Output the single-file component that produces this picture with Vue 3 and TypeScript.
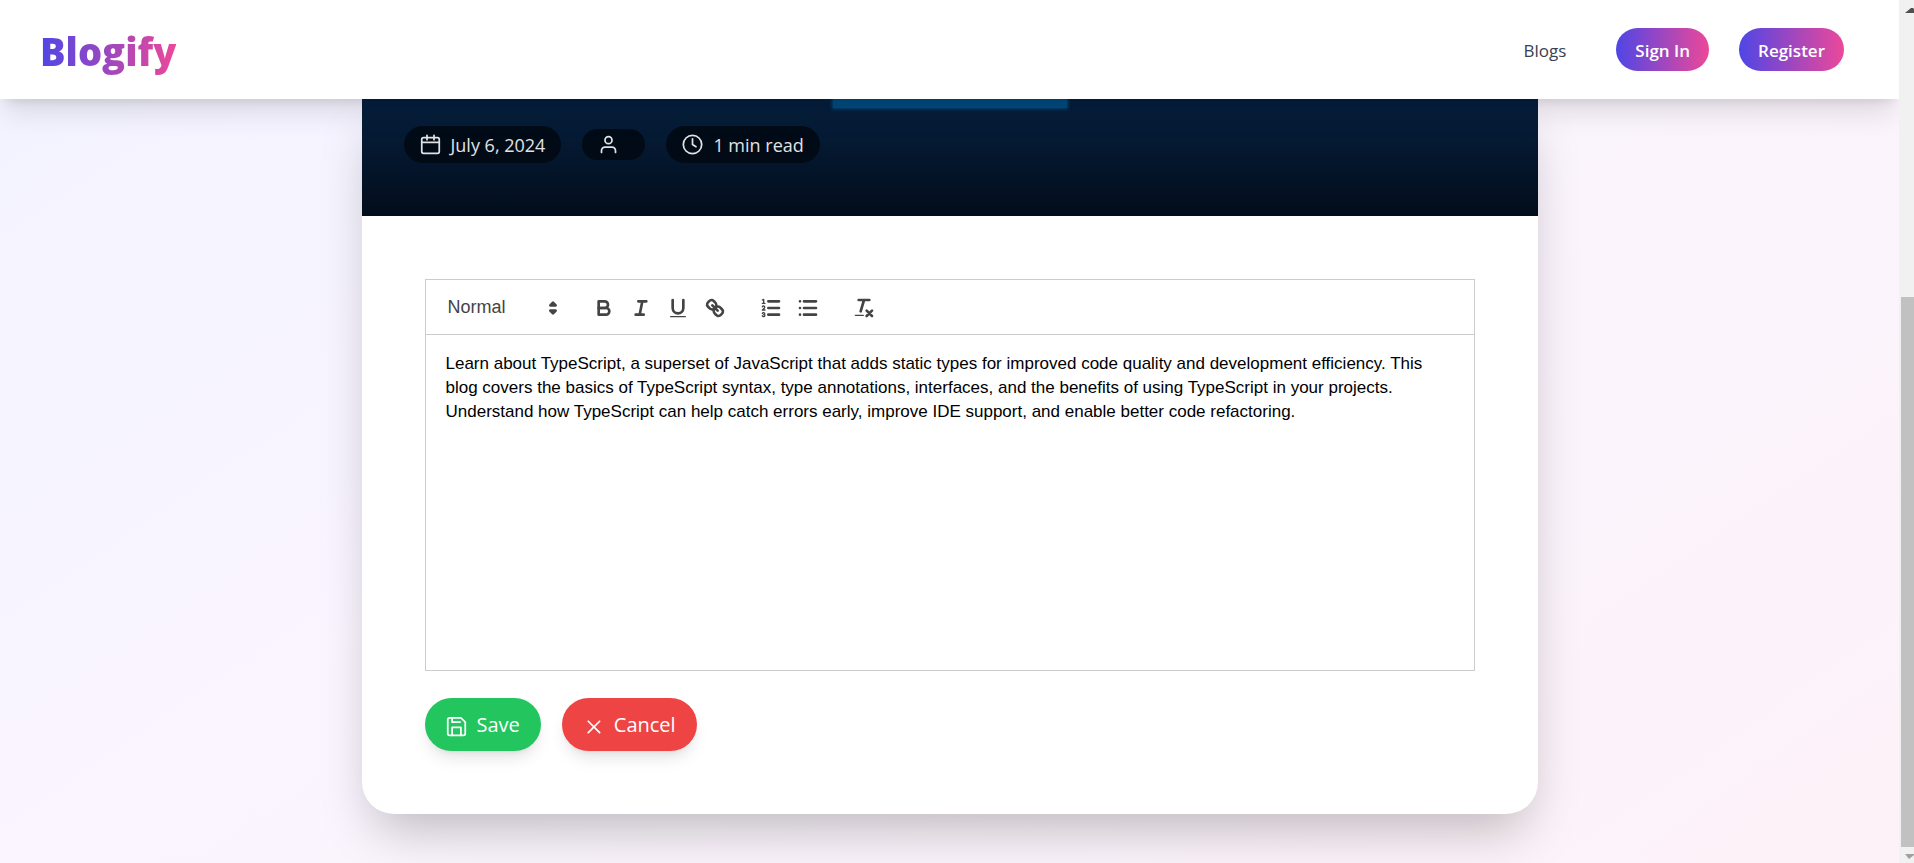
<script setup lang="ts">
import { ref } from 'vue'

const format = ref('Normal')
const body = ref(
  'Learn about TypeScript, a superset of JavaScript that adds static types for improved code quality and development efficiency. This blog covers the basics of TypeScript syntax, type annotations, interfaces, and the benefits of using TypeScript in your projects. Understand how TypeScript can help catch errors early, improve IDE support, and enable better code refactoring.'
)
</script>

<template>
  <div class="window">
    <div class="page">
      <header class="topbar">
        <a class="brand" href="#">Blogify</a>
        <nav class="nav">
          <a class="nav-link" href="#">Blogs</a>
          <a class="nav-pill" href="#">Sign In</a>
          <a class="nav-pill" href="#">Register</a>
        </nav>
      </header>

      <main class="card">
        <section class="hero">
          <div class="hero-mark"></div>
          <ul class="meta">
            <li class="chip">
              <svg class="chip-icon" viewBox="0 0 24 24" aria-hidden="true">
                <rect x="2" y="4" width="20" height="18" rx="2" />
                <path d="M2 9.500h20M8 1.500v5M16 1.500v5" />
              </svg>
              <span class="chip-text">July 6, 2024</span>
            </li>
            <li class="chip">
              <svg class="chip-icon" viewBox="0 0 24 24" aria-hidden="true">
                <circle cx="12" cy="7" r="4" />
                <path d="M20 21v-2a4 4 0 0 0-4-4H8a4 4 0 0 0-4 4v2" />
              </svg>
              <span class="chip-text"></span>
            </li>
            <li class="chip">
              <svg class="chip-icon" viewBox="0 0 24 24" aria-hidden="true">
                <circle cx="12" cy="12" r="10.500" />
                <path d="M12 5.500V12l4 2.500" />
              </svg>
              <span class="chip-text">1 min read</span>
            </li>
          </ul>
        </section>

        <section class="content">
          <div class="editor">
            <div class="toolbar">
              <label class="picker">
                <select v-model="format" class="picker-select" aria-label="Text style">
                  <option>Normal</option>
                  <option>Heading 1</option>
                  <option>Heading 2</option>
                </select>
                <svg class="tool-icon" viewBox="0 0 18 18" aria-hidden="true">
                  <polygon class="solid" points="7 11 9 13 11 11 7 11" />
                  <polygon class="solid" points="7 7 9 5 11 7 7 7" />
                </svg>
              </label>
              <div class="tools">
                <button type="button" class="tool" aria-label="Bold">
                  <svg class="tool-icon" viewBox="0 0 18 18">
                    <path d="M5,4H9.500A2.500,2.500,0,0,1,12,6.500v0A2.500,2.500,0,0,1,9.500,9H5A0,0,0,0,1,5,9V4A0,0,0,0,1,5,4Z" />
                    <path d="M5,9h5.500A2.500,2.500,0,0,1,13,11.500v0A2.500,2.500,0,0,1,10.500,14H5a0,0,0,0,1,0,0V9A0,0,0,0,1,5,9Z" />
                  </svg>
                </button>
                <button type="button" class="tool" aria-label="Italic">
                  <svg class="tool-icon" viewBox="0 0 18 18">
                    <path d="M7 4h6M5 14h6M8 14l2-10" />
                  </svg>
                </button>
                <button type="button" class="tool" aria-label="Underline">
                  <svg class="tool-icon" viewBox="0 0 18 18">
                    <path d="M5,3V9a4.012,4.012,0,0,0,4,4H9a4.012,4.012,0,0,0,4-4V3" />
                    <rect class="solid" height="1" rx="0.500" ry="0.500" width="12" x="3" y="15" />
                  </svg>
                </button>
                <button type="button" class="tool" aria-label="Link">
                  <svg class="tool-icon" viewBox="0 0 18 18">
                    <path d="M7 7l4 4" />
                    <path d="M8.900,4.577a3.476,3.476,0,0,1,.36,4.679A3.476,3.476,0,0,1,4.577,8.900C3.185,7.500,2.035,6.400,4.217,4.217S7.500,3.185,8.900,4.577Z" />
                    <path d="M13.423,9.100a3.476,3.476,0,0,0-4.679-.36,3.476,3.476,0,0,0,.36,4.679c1.392,1.392,2.500,2.542,4.679.36S14.815,10.500,13.423,9.100Z" />
                  </svg>
                </button>
              </div>
              <div class="tools">
                <button type="button" class="tool" aria-label="Ordered list">
                  <svg class="tool-icon" viewBox="0 0 18 18">
                    <path d="M7 4h8M7 9h8M7 14h8" />
                    <path class="thin" d="M2.500 5.500h2M3.500 5.500v-3l-1 .5" />
                    <path class="thin" d="M4.500 10.500h-2c0-.234 1.850-1.076 1.850-2.234a.959 .959 0 0 0-1.850-.156" />
                    <path class="thin" d="M2.500 14.846a.959 .959 0 0 0 1.850-.156a.7 .7 0 0 0-.85-.69a.7 .7 0 0 0 .85-.69a.959 .959 0 0 0-1.850-.156" />
                  </svg>
                </button>
                <button type="button" class="tool" aria-label="Bullet list">
                  <svg class="tool-icon" viewBox="0 0 18 18">
                    <path d="M6 4h9M6 9h9M6 14h9M3 4v0M3 9v0M3 14v0" />
                  </svg>
                </button>
              </div>
              <div class="tools">
                <button type="button" class="tool" aria-label="Clear formatting">
                  <svg class="tool-icon" viewBox="0 0 18 18">
                    <path d="M5 3h8M6.500 11.500L9 3M11 11l4 4M15 11l-4 4" />
                    <rect class="solid" height="1" rx="0.500" ry="0.500" width="7" x="2" y="14" />
                  </svg>
                </button>
              </div>
            </div>
            <textarea v-model="body" class="editor-text" aria-label="Blog content" spellcheck="false"></textarea>
          </div>

          <div class="actions">
            <button type="button" class="action save">
              <svg class="action-icon" viewBox="0 0 24 24" aria-hidden="true">
                <path d="M4 2h13l5 5v13a2 2 0 0 1-2 2H4a2 2 0 0 1-2-2V4a2 2 0 0 1 2-2z" />
                <path d="M7 22v-9h10v9M7 2v5h9" />
              </svg>
              Save
            </button>
            <button type="button" class="action cancel">
              <svg class="action-icon" viewBox="0 0 24 24" aria-hidden="true">
                <path d="M19 6L6 19M6 6l13 13" />
              </svg>
              Cancel
            </button>
          </div>
        </section>
      </main>
    </div>

    <div class="scrollbar" aria-hidden="true">
      <svg class="scroll-arrow" viewBox="0 0 15 16"><path fill="#505050" d="M6 13h9V9l-1-1h-2z" /></svg>
      <div class="scroll-thumb"></div>
      <svg class="scroll-arrow" viewBox="0 0 15 16"><path fill="#a0a0a0" d="M6 7h9v1l-5 4z" /></svg>
    </div>
  </div>
</template>

<style>
body {
  margin: 0;
}
</style>

<style scoped>
.window {
  display: flex;
  height: 100vh;
  overflow: hidden;
  font-family: 'Open Sans', 'Noto Sans', sans-serif;
}

.page {
  flex: 1;
  min-width: 0;
  overflow: hidden;
  background: linear-gradient(to bottom right, #eef2ff, #faf5ff, #fdf2f8) bottom / 100% 150% no-repeat;
}

.topbar {
  position: relative;
  z-index: 1;
  display: flex;
  align-items: center;
  justify-content: space-between;
  height: 99px;
  padding: 0 55px 0 40px;
  box-sizing: border-box;
  background: #fff;
  box-shadow: 0 20px 25px -5px rgba(0, 0, 0, 0.1), 0 8px 10px -6px rgba(0, 0, 0, 0.1);
}

.brand {
  padding-top: 2px;
  font-size: 38px;
  line-height: 48px;
  font-weight: 800;
  text-decoration: none;
  color: transparent;
  background: linear-gradient(to right, #4f46e5, #ec4899);
  background-clip: text;
}

.nav {
  display: flex;
  align-items: center;
  gap: 30px;
  font-size: 17px;
  line-height: 27px;
}

.nav-link {
  margin-right: 20px;
  padding-top: 2px;
  font-weight: 500;
  color: #374151;
  text-decoration: none;
}

.nav-pill {
  padding: 9px 19px 7px;
  border-radius: 22px;
  font-weight: 600;
  color: #fff;
  text-decoration: none;
  background: linear-gradient(to right, #4f46e5, #ec4899);
}

.card {
  max-width: 1176px;
  margin: 0 auto;
  overflow: hidden;
  border-radius: 0 0 32px 32px;
  background: #fff;
  box-shadow: 0 26px 52px -12px rgba(0, 0, 0, 0.25);
}

.hero {
  padding: 0 42px 53px;
  background: linear-gradient(#06203f, #020d1b);
}

.hero-mark {
  width: 234px;
  height: 9px;
  margin: 0 auto 18px;
  background: #004c80;
  box-shadow: 0 0 3px 1px #004c80;
}

.meta {
  display: flex;
  align-items: center;
  gap: 21px;
  margin: 0;
  padding: 0;
  list-style: none;
  font-size: 18px;
  line-height: 25px;
  color: #e0e2e5;
}

.chip {
  display: flex;
  align-items: center;
  gap: 10px;
  padding: 5px 16px;
  border-radius: 20px;
  background: rgba(0, 5, 12, 0.7);
}

.chip-text {
  padding-top: 2px;
}

.chip-icon {
  width: 21px;
  height: 21px;
  fill: none;
  stroke: currentColor;
  stroke-width: 2;
  stroke-linecap: round;
  stroke-linejoin: round;
}

.content {
  padding: 63px;
}

.editor {
  border: 1px solid #ccc;
}

.toolbar {
  display: flex;
  align-items: center;
  gap: 19px;
  height: 55px;
  padding: 2px 16px 0;
  border-bottom: 1px solid #ccc;
  box-sizing: border-box;
}

.picker {
  display: flex;
  align-items: center;
  margin-right: 2px;
  color: #444;
}

.picker-select {
  width: 99px;
  height: 32px;
  padding: 0 0 2px 6px;
  border: 0;
  appearance: none;
  background: transparent;
  color: inherit;
  font-family: 'Liberation Sans', Arial, sans-serif;
  font-size: 18px;
}

.tools {
  display: flex;
}

.tool {
  display: flex;
  align-items: center;
  justify-content: center;
  width: 37px;
  height: 32px;
  padding: 0;
  border: 0;
  background: transparent;
  color: #444;
}

.tool-icon {
  width: 24px;
  height: 24px;
  fill: none;
  stroke: currentColor;
  stroke-width: 2;
  stroke-linecap: round;
  stroke-linejoin: round;
}

.tool-icon .solid {
  fill: currentColor;
  stroke: none;
}

.picker .tool-icon .solid {
  stroke: currentColor;
  stroke-width: 2;
}

.tool-icon .thin {
  stroke-width: 1;
}

.editor-text {
  display: block;
  width: 100%;
  height: 335px;
  padding: 17px 20px;
  border: 0;
  box-sizing: border-box;
  resize: none;
  outline: none;
  color: #000;
  background: transparent;
  font-family: 'Liberation Sans', Arial, sans-serif;
  font-size: 17px;
  line-height: 24px;
}

.actions {
  display: flex;
  gap: 21px;
  margin-top: 27px;
}

.action {
  display: flex;
  align-items: center;
  gap: 10px;
  padding: 12px 21px;
  border: 0;
  border-radius: 27px;
  color: #fff;
  font-family: inherit;
  font-size: 20px;
  line-height: 29px;
  box-shadow: 0 10px 16px -3px rgba(0, 0, 0, 0.1), 0 4px 6px -4px rgba(0, 0, 0, 0.1);
}

.action-icon {
  width: 21px;
  height: 21px;
  margin-top: 4px;
  fill: none;
  stroke: currentColor;
  stroke-width: 2;
  stroke-linecap: round;
  stroke-linejoin: round;
}

.save {
  background: #22c55e;
}

.cancel {
  background: #ef4444;
}

.scrollbar {
  display: flex;
  flex-direction: column;
  width: 15px;
  background: #f1f1f1;
}

.scroll-arrow {
  width: 15px;
  height: 16px;
}

.scroll-thumb {
  height: 550px;
  margin-top: auto;
  margin-left: 2px;
  background: #c1c1c1;
}
</style>
